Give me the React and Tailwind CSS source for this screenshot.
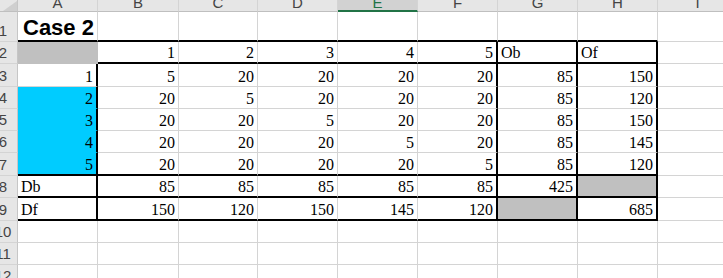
const COLS = ['A', 'B', 'C', 'D', 'E', 'F', 'G', 'H', 'I'];
const WIDTHS = ['w-[80px]', 'w-[81px]', 'w-[79px]', 'w-[80px]', 'w-[80px]', 'w-[80px]', 'w-[80px]', 'w-[80px]', 'w-[80px]'];
const HEIGHTS = {
  1: 'h-[30px]', 2: 'h-[22px]', 3: 'h-[23px]', 4: 'h-[22px]', 5: 'h-[22px]', 6: 'h-[22px]',
  7: 'h-[23px]', 8: 'h-[22px]', 9: 'h-[23px]', 10: 'h-[22px]', 11: 'h-[22px]', 12: 'h-[22px]',
};

// sheet values, row -> [A..I]
const DATA = {
  1: ['Case 2'],
  2: ['', 1, 2, 3, 4, 5, 'Ob', 'Of'],
  3: [1, 5, 20, 20, 20, 20, 85, 150],
  4: [2, 20, 5, 20, 20, 20, 85, 120],
  5: [3, 20, 20, 5, 20, 20, 85, 150],
  6: [4, 20, 20, 20, 5, 20, 85, 145],
  7: [5, 20, 20, 20, 20, 5, 85, 120],
  8: ['Db', 85, 85, 85, 85, 85, 425, ''],
  9: ['Df', 150, 120, 150, 145, 120, '', 685],
};

const fillOf = (r, c) => {
  if ((r === 2 && c === 0) || (r === 8 && c === 7) || (r === 9 && c === 6)) return 'gray';
  if (c === 0 && r >= 4 && r <= 7) return 'cyan';
  return null;
};

const thickRight = (r, c) =>
  (c === 0 && r >= 3 && r <= 9) || ((c === 5 || c === 6 || c === 7) && r >= 2 && r <= 9);

const thickBottom = (r, c) =>
  (r === 1 && c <= 7) || (r === 2 && c >= 1 && c <= 7) || ((r === 7 || r === 8 || r === 9) && c <= 7);

function Cell({ r, c }) {
  const v = DATA[r]?.[c];
  const fill = fillOf(r, c);
  const isText = typeof v === 'string';

  let right = 'border-r border-r-[#d4d4d4]';
  if (thickRight(r, c)) right = 'border-r-2 border-r-black';
  else if (fill === 'gray') right = 'border-r border-r-[#c0c0c0]';
  else if (fill === 'cyan') right = 'border-r border-r-[#00ccff]';

  let bottom = 'border-b border-b-[#d4d4d4]';
  if (thickBottom(r, c)) bottom = 'border-b-2 border-b-black';
  else if (fill === 'gray') bottom = 'border-b border-b-[#c0c0c0]';
  else if (fill === 'cyan') bottom = 'border-b border-b-[#00ccff]';

  const bg = fill === 'gray' ? 'bg-[#c0c0c0]' : fill === 'cyan' ? 'bg-[#00ccff]' : 'bg-white';

  if (r === 1 && c === 0) {
    return (
      <div className={`${WIDTHS[c]} shrink-0 flex items-end pl-[5px] pb-[1px] whitespace-nowrap ${bg} ${right} ${bottom}`}>
        <span className="font-['Liberation_Sans',Arial,sans-serif] font-bold text-[22px] leading-none text-black">{v}</span>
      </div>
    );
  }

  return (
    <div
      className={`${WIDTHS[c]} shrink-0 flex items-end pb-[1px] whitespace-nowrap ${
        isText ? 'justify-start pl-[3px]' : 'justify-end pr-[3px]'
      } ${bg} ${right} ${bottom}`}
    >
      <span className="font-['Liberation_Serif','Times_New_Roman',serif] text-[16px] leading-none text-black">{v}</span>
    </div>
  );
}

// row numbers sit partly off the left edge, as in the scrolled window
function RowHeader({ n, h }) {
  return (
    <div className={`w-[18px] ${h} shrink-0 flex items-end overflow-hidden bg-[#e6e6e6] border-r border-r-[#c6c6c6] border-b border-b-[#d4d4d4] pb-[3px]`}>
      <div className="w-[20px] -ml-[7px] shrink-0 text-center font-['Liberation_Sans',Arial,sans-serif] text-[15px] leading-none text-[#444] whitespace-nowrap">
        {n}
      </div>
    </div>
  );
}

export default function App() {
  const rows = Array.from({ length: 12 }, (_, i) => i + 1);
  return (
    <div className="w-[723px] h-[278px] overflow-hidden bg-white">
      <div className="w-max">
        {/* column headers */}
        <div className="flex h-[12px]">
          <div className="w-[18px] h-[12px] shrink-0 bg-[#e6e6e6] border-r border-r-[#c6c6c6] border-b border-b-[#bfbfbf] flex items-end justify-end">
            <svg width="14" height="10" viewBox="0 0 14 10">
              <polygon points="14,0 14,10 0,10" fill="#cfcfcf" />
            </svg>
          </div>
          {COLS.map((col, c) => (
            <div
              key={col}
              className={`${WIDTHS[c]} h-[12px] shrink-0 flex items-end justify-center overflow-hidden border-r border-r-[#d4d4d4] ${
                col === 'E'
                  ? 'bg-[#d2d2d2] border-b-2 border-b-[#217346] pb-0'
                  : 'bg-[#e6e6e6] border-b border-b-[#bfbfbf] pb-[1px]'
              }`}
            >
              <span
                className={`font-['Liberation_Sans',Arial,sans-serif] text-[15px] leading-none ${
                  col === 'E' ? 'text-[#217346]' : 'text-[#444]'
                }`}
              >
                {col}
              </span>
            </div>
          ))}
        </div>

        {rows.map((r) => (
          <div key={r} className={`flex ${HEIGHTS[r]}`}>
            <RowHeader n={r} h={HEIGHTS[r]} />
            {COLS.map((col, c) => (
              <Cell key={col} r={r} c={c} />
            ))}
          </div>
        ))}
      </div>
    </div>
  );
}
